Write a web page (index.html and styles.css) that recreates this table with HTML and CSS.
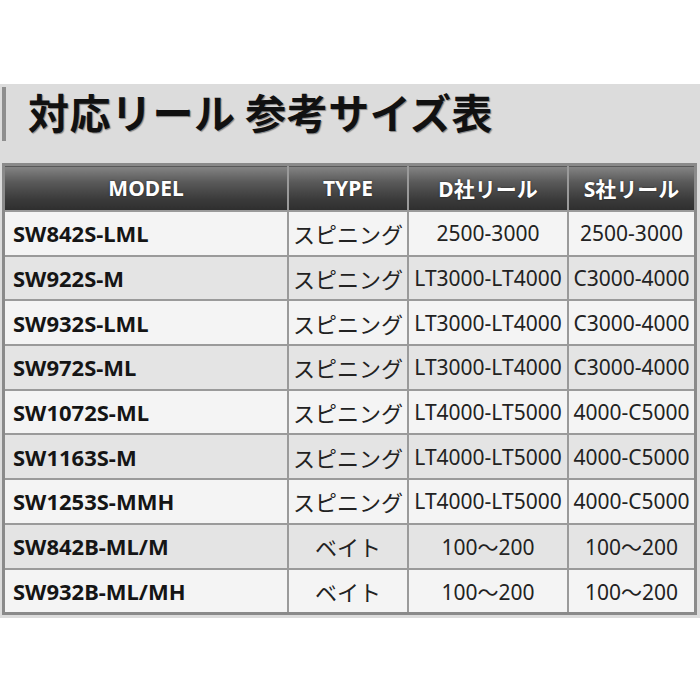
FILE: index.html
```html
<!DOCTYPE html>
<html lang="ja">
<head>
<meta charset="utf-8">
<link rel="stylesheet" href="styles.css">
</head>
<body>
<div class="page">
  <section class="panel">
    <h1 class="title">対応リール 参考サイズ表</h1>
    <table class="sizes">
      <thead>
        <tr><th class="c1">MODEL</th><th class="c2">TYPE</th><th class="c3">D社リール</th><th class="c4">S社リール</th></tr>
      </thead>
      <tbody>
        <tr><td class="model">SW842S-LML</td><td class="jp">スピニング</td><td>2500-3000</td><td>2500-3000</td></tr>
        <tr><td class="model">SW922S-M</td><td class="jp">スピニング</td><td>LT3000-LT4000</td><td>C3000-4000</td></tr>
        <tr><td class="model">SW932S-LML</td><td class="jp">スピニング</td><td>LT3000-LT4000</td><td>C3000-4000</td></tr>
        <tr><td class="model">SW972S-ML</td><td class="jp">スピニング</td><td>LT3000-LT4000</td><td>C3000-4000</td></tr>
        <tr><td class="model">SW1072S-ML</td><td class="jp">スピニング</td><td>LT4000-LT5000</td><td>4000-C5000</td></tr>
        <tr><td class="model">SW1163S-M</td><td class="jp">スピニング</td><td>LT4000-LT5000</td><td>4000-C5000</td></tr>
        <tr><td class="model">SW1253S-MMH</td><td class="jp">スピニング</td><td>LT4000-LT5000</td><td>4000-C5000</td></tr>
        <tr><td class="model">SW842B-ML/M</td><td class="jp">ベイト</td><td>100～200</td><td>100～200</td></tr>
        <tr><td class="model">SW932B-ML/MH</td><td class="jp">ベイト</td><td>100～200</td><td>100～200</td></tr>
      </tbody>
    </table>
  </section>
</div>
</body>
</html>
```

FILE: styles.css
```css
html, body {
  margin: 0;
  padding: 0;
  background: #ffffff;
}

.page {
  padding-top: 84px;
  font-family: "Noto Sans", "Noto Sans CJK JP", sans-serif;
  color: #222;
}

.panel {
  background: #dcdcdc;
  padding: 3px 3px 3px 2px;
}

.title {
  margin: 0 0 22px 0;
  border-left: 4px solid #8e8e8e;
  padding-left: 22px;
  height: 54px;
  line-height: 48px;
  font-family: "Noto Sans CJK JP", sans-serif;
  font-size: 41px;
  font-weight: 700;
  color: #111;
  letter-spacing: 0.5px;
  text-shadow: 1px 1px 1px rgba(0, 0, 0, 0.4);
}

.sizes {
  width: 695px;
  border-collapse: collapse;
  table-layout: fixed;
  border: 3px solid #8a8a8a;
}

.sizes th,
.sizes td {
  border: 2px solid #9a9a9a;
  padding: 0;
  text-align: center;
  white-space: nowrap;
  overflow: hidden;
}

.sizes th {
  height: 44px;
  font-size: 21px;
  font-weight: 700;
  color: #fff;
  background: linear-gradient(#858585 0%, #5a5a5a 35%, #3a3a3a 75%, #2e2e2e 100%);
  text-shadow: 0 0 2px rgba(0, 0, 0, 0.6);
}

.sizes .c1 { width: 282px; }
.sizes .c2 { width: 118px; }
.sizes .c3 { width: 158px; }
.sizes .c4 { width: auto; }

.sizes td {
  height: 42.7px;
  font-size: 21px;
  color: #222;
}

.sizes td.jp {
  font-size: 22px;
}

.sizes tbody tr:nth-child(odd) td { background: #f4f4f4; }
.sizes tbody tr:nth-child(even) td { background: #e4e4e4; }

.sizes td.model {
  text-align: left;
  padding-left: 8px;
  font-weight: 700;
  font-size: 22px;
  color: #151515;
}
```
